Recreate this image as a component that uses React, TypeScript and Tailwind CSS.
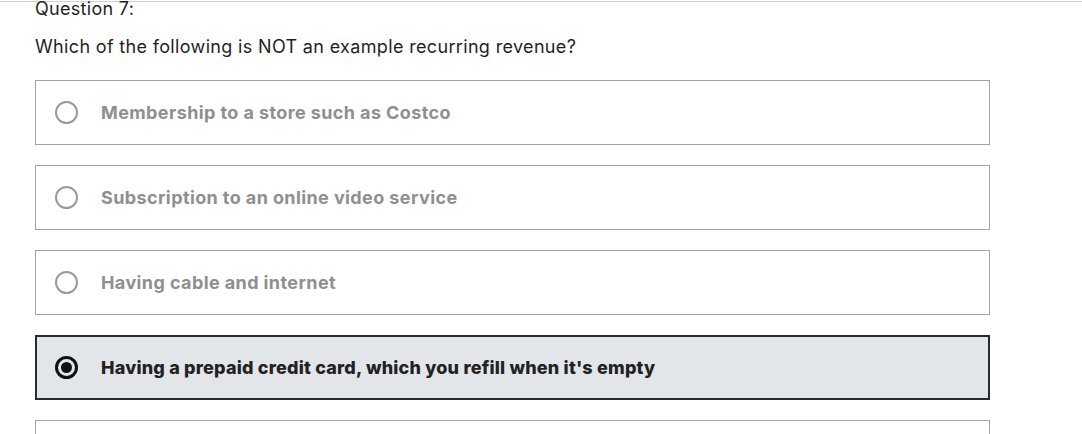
import React from "react";

const options = [
  { label: "Membership to a store such as Costco", selected: false },
  { label: "Subscription to an online video service", selected: false },
  { label: "Having cable and internet", selected: false },
  { label: "Having a prepaid credit card, which you refill when it's empty", selected: true },
  { label: "", selected: false },
];

const Radio = ({ on }: { on: boolean }) =>
  on ? (
    <span className="flex h-[23px] w-[23px] shrink-0 items-center justify-center rounded-full border-[3px] border-[#111]">
      <span className="h-[11px] w-[11px] rounded-full bg-[#111]" />
    </span>
  ) : (
    <span className="h-[23px] w-[23px] shrink-0 rounded-full border-2 border-[#9a9a9a]" />
  );

export default function App() {
  return (
    <div className="h-[434px] w-[1082px] overflow-hidden bg-white font-['Inter',sans-serif]">
      <div className="mt-px border-t border-[#d2d2d2]" />
      <div className="pl-[35px] pr-[92px]">
        <div className="text-[18px] leading-[14px] tracking-[0.3px] text-[#1f1f1f]">Question 7:</div>
        <div className="mt-[19px] text-[18px] leading-[24px] tracking-[0.34px] text-[#1f1f1f]">
          Which of the following is NOT an example recurring revenue?
        </div>
        <div className="mt-[21px] flex flex-col gap-5">
          {options.map((o, i) => (
            <div
              key={i}
              className={
                o.selected
                  ? "flex h-[65px] items-center gap-[23px] border-2 border-[#2b2b2b] bg-[#e3e6e9] pl-[18px]"
                  : "flex h-[65px] items-center gap-[23px] border border-[#a3a3a3] bg-white pl-[19px]"
              }
            >
              <Radio on={o.selected} />
              <span
                className={
                  o.selected
                    ? "text-[18px] font-extrabold tracking-[0.2px] text-[#222]"
                    : "text-[18px] font-bold tracking-[0.4px] text-[#8f8f8f]"
                }
              >
                {o.label}
              </span>
            </div>
          ))}
        </div>
      </div>
    </div>
  );
}
